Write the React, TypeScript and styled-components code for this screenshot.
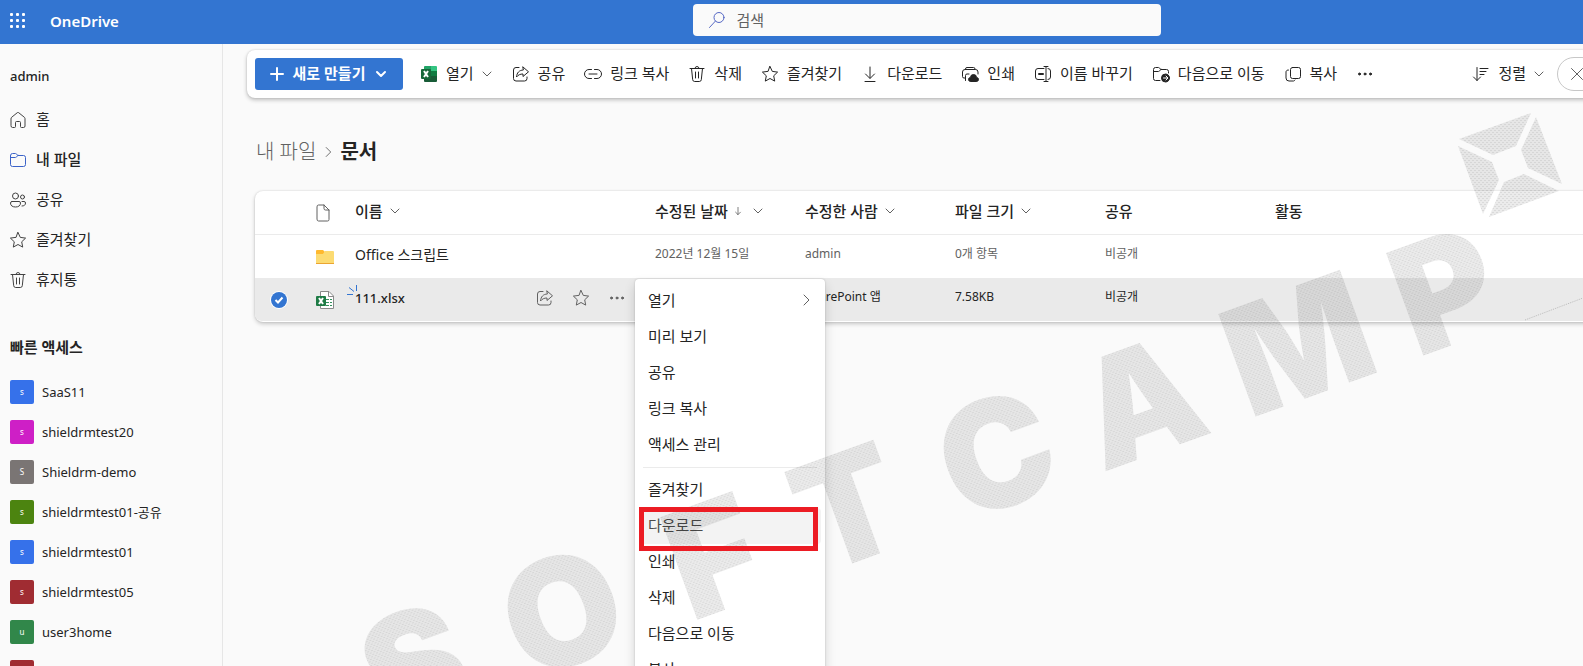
import React from 'react';
import styled, { createGlobalStyle, css } from 'styled-components';

const GlobalStyle = createGlobalStyle`
  *, *::before, *::after { box-sizing: border-box; }
  body {
    margin: 0;
    background: #fafafa;
    color: #242424;
    font-family: "Noto Sans", "Noto Sans CJK KR", sans-serif;
    font-size: 15px;
    line-height: 20px;
  }
  button, input { font: inherit; color: inherit; }
  a { color: inherit; text-decoration: none; }
  ul { list-style: none; margin: 0; padding: 0; }
`;

/* ---------- icons ---------- */

const Svg = styled.svg<{ $size?: number }>`
  display: block;
  flex: none;
  width: ${(p) => p.$size ?? 20}px;
  height: ${(p) => p.$size ?? 20}px;
  fill: none;
  stroke: currentColor;
  stroke-width: 1;
  stroke-linecap: round;
  stroke-linejoin: round;
`;

const drawings: Record<string, React.ReactNode> = {
  home: <path d="M3 8.6c0-.5.2-.9.5-1.2L9.300 2.700a1 1 0 0 1 1.400 0l5.800 4.700c.3.300.5.700.5 1.200V16a1.500 1.500 0 0 1-1.500 1.500h-2A1 1 0 0 1 12.500 16.500v-4a1 1 0 0 0-1-1h-3a1 1 0 0 0-1 1v4a1 1 0 0 1-1 1h-2A1.500 1.500 0 0 1 3 16z" />,
  folder: <path d="M2.500 6v8.500a2 2 0 0 0 2 2h11a2 2 0 0 0 2-2v-7a2 2 0 0 0-2-2H10L8.200 3.900a1.500 1.500 0 0 0-.9-.4H4.500a2 2 0 0 0-2 2zM2.500 7.500h4.700c.4 0 .7-.1 1-.4L10 5.500" />,
  people: (
    <>
      <circle cx="7.500" cy="6" r="3" />
      <circle cx="14.500" cy="7" r="2" />
      <path d="M4 11.500h7a1.500 1.500 0 0 1 1.500 1.500c0 2.500-1.800 4-5 4s-5-1.500-5-4A1.500 1.500 0 0 1 4 11.500zM14 11.500h2a1.500 1.500 0 0 1 1.500 1.500c0 2-1.300 3-3.500 3" />
    </>
  ),
  star: <path d="M10 2.500l2.300 4.900 5.300.7-3.900 3.700 1 5.300-4.700-2.600-4.700 2.600 1-5.300L2.400 8.100l5.300-.7z" />,
  trash: <path d="M3 4.500h14M8 4.500a2 2 0 0 1 4 0M4.500 4.500l1.200 11.200a2 2 0 0 0 2 1.800h4.600a2 2 0 0 0 2-1.800l1.200-11.200M8.500 8v6M11.500 8v6" />,
  share: <path d="M8 3.500H5A2.500 2.500 0 0 0 2.500 6v8.500A2.500 2.500 0 0 0 5 17h8.500a2.500 2.500 0 0 0 2.500-2.500V13M12 3l5.500 4.800-5.500 4.700V10c-2.800 0-4.700.8-6.500 3 .4-4.300 2.600-6.800 6.500-7z" />,
  link: <path d="M8.500 5.500H6a4.500 4.500 0 0 0 0 9h2.500M11.500 5.500H14a4.500 4.500 0 0 1 0 9h-2.500M6 10h8" />,
  download: <path d="M10 3v11M5.500 10l4.500 4.500L14.500 10M5 17.500h10" />,
  print: (
    <>
      <path d="M5.500 5.500V5A1.500 1.500 0 0 1 7 3.500h6.500A1.500 1.500 0 0 1 15 5v.500M5 14H4a1.500 1.500 0 0 1-1.500-1.500V8A2.500 2.500 0 0 1 5 5.500h10.500A2.500 2.500 0 0 1 18 8v2M5.500 16.500v-5A1.500 1.500 0 0 1 7 10h2" />
      <path fill="currentColor" d="M10.500 17.500a2 2 0 0 1 0-4 3 3 0 0 1 6 0 2 2 0 0 1 0 4z" />
    </>
  ),
  rename: (
    <>
      <path d="M11 4.500H5A2.500 2.500 0 0 0 2.500 7v6A2.500 2.500 0 0 0 5 15.500h6M15 4.500A2.500 2.500 0 0 1 17.500 7v6a2.500 2.500 0 0 1-2.500 2.500M11 2.500h4M11 17.500h4M13 2.500v15" />
      <path strokeWidth="2" d="M6 10h4" />
    </>
  ),
  move: (
    <>
      <path d="M9 16.500H4.500a2 2 0 0 1-2-2v-9a2 2 0 0 1 2-2h2.800c.4 0 .7.100.9.400L10 5.500h5.500a2 2 0 0 1 2 2v1.500M2.500 7.500h4.700c.4 0 .7-.1 1-.4L10 5.500" />
      <circle cx="14.500" cy="14" r="4" fill="currentColor" />
      <path stroke="#fff" d="M12.500 14h4M15 12l2 2-2 2" />
    </>
  ),
  copy: <path d="M9.500 3.500h6a2 2 0 0 1 2 2v7a2 2 0 0 1-2 2h-6a2 2 0 0 1-2-2v-7a2 2 0 0 1 2-2zM5.500 6a2 2 0 0 0-2.500 2v6a3 3 0 0 0 3 3h4.500a2 2 0 0 0 1.500-1" />,
  more: (
    <>
      <circle cx="4.500" cy="10" r="1" fill="currentColor" />
      <circle cx="10" cy="10" r="1" fill="currentColor" />
      <circle cx="15.500" cy="10" r="1" fill="currentColor" />
    </>
  ),
  sort: <path d="M6 3.500v13M2.500 13L6 16.500 9.500 13M9 4.500h8M9 7.500h6M9 10.500h4" />,
  close: <path d="M4.500 4.500l11 11M15.500 4.500l-11 11" />,
  search: (
    <>
      <circle cx="12" cy="7.500" r="5" />
      <path d="M8.300 11.200L2.500 17.500" />
    </>
  ),
  doc: <path d="M4 3.500A1.500 1.500 0 0 1 5.500 2H11l5 5v9.500a1.500 1.500 0 0 1-1.500 1.500h-9A1.500 1.500 0 0 1 4 16.500zM11 2v3.500A1.500 1.500 0 0 0 12.500 7H16" />,
  plus: <path strokeWidth="2" d="M10 4v12M4 10h12" />,
  down: <path d="M6 8l4 4 4-4" />,
  right: <path d="M8 5l5 5-5 5" />,
  arrow: <path d="M10 5.500v9M7 11.500l3 3 3-3" />,
};

const Icon = ({ name, size, width }: { name: string; size?: number; width?: number }) => (
  <Svg viewBox="0 0 20 20" $size={size} style={width ? { strokeWidth: width } : undefined} aria-hidden="true">
    {drawings[name]}
  </Svg>
);

const Caret = styled(Svg)`
  margin: 0 -4px;
  color: #616161;
`;

const DownCaret = () => (
  <Caret viewBox="0 0 20 20" aria-hidden="true">
    {drawings.down}
  </Caret>
);

const PlainSvg = styled.svg`
  display: block;
  flex: none;
`;

const ExcelIcon = () => (
  <PlainSvg width="20" height="20" viewBox="0 0 20 20" aria-hidden="true">
    <path fill="#21a366" d="M5 3a1 1 0 0 1 1-1h6v5H5z" />
    <path fill="#33c481" d="M12 2h5a1 1 0 0 1 1 1v4h-6z" />
    <path fill="#107c41" d="M12 7h6v5h-6z" />
    <path fill="#1a7040" d="M5 7h7v5H5z" />
    <path fill="#185c37" d="M5 12h13v5a1 1 0 0 1-1 1H6a1 1 0 0 1-1-1z" />
    <rect x="2" y="5" width="10" height="10" rx="1" fill="#17683a" />
    <path stroke="#fff" strokeWidth="2" d="M5 7l4 6M9 7l-4 6" />
  </PlainSvg>
);

const XlsxIcon = () => (
  <PlainSvg width="20" height="20" viewBox="0 0 20 20" aria-hidden="true">
    <path fill="#fff" stroke="#8a8a8a" d="M5.500 1.500h8.500l4.500 4.500v12.500h-13z" />
    <path fill="none" stroke="#8a8a8a" d="M13.500 1.500v5h5" />
    <path stroke="#33905c" strokeDasharray="3 1" d="M11 9.500h6M11 12.500h6M11 15.500h6" />
    <rect x="1" y="6" width="10" height="10" rx="1" fill="#1e7b45" />
    <path stroke="#fff" strokeWidth="2" d="M4 8l4 6M8 8l-4 6" />
  </PlainSvg>
);

const FolderIcon = () => (
  <PlainSvg width="20" height="20" viewBox="0 0 20 20" aria-hidden="true">
    <path fill="#ffb92e" d="M1 4a1 1 0 0 1 1-1h6l2 2-2 3H1z" />
    <path fill="#fcdb72" d="M1 7h7l2-3h8a1 1 0 0 1 1 1v11H1z" />
    <path fill="#eba531" d="M1 16h18v1H1z" />
  </PlainSvg>
);

/* ---------- top bar ---------- */

const Header = styled.header`
  position: relative;
  display: flex;
  align-items: center;
  flex: none;
  height: 44px;
  background: #3375d1;
  color: #fff;
`;

const Waffle = styled.button`
  display: flex;
  padding: 8px;
  border: 0;
  background: none;
`;

const Brand = styled.a`
  margin-left: 14px;
  padding-bottom: 3px;
  font-size: 15px;
  font-weight: 600;
`;

const Search = styled.label`
  position: absolute;
  top: 4px;
  left: calc(50% + 135px);
  display: flex;
  align-items: center;
  gap: 10px;
  width: 468px;
  height: 32px;
  padding: 0 14px;
  transform: translateX(-50%);
  border-radius: 4px;
  background: #fafafa;
  color: #5567c4;
`;

const SearchInput = styled.input`
  flex: 1;
  min-width: 0;
  padding: 0;
  border: 0;
  outline: 0;
  background: none;
  color: #242424;
  &::placeholder { color: #616161; opacity: 1; }
`;

/* ---------- frame ---------- */

const Page = styled.div`
  position: relative;
  display: flex;
  flex-direction: column;
  height: 100vh;
  overflow: hidden;
`;

const Body = styled.div`
  display: flex;
  flex: 1;
  min-height: 0;
`;

const Sidebar = styled.nav`
  flex: none;
  width: 223px;
  padding-top: 12px;
  overflow: hidden;
  border-right: 1px solid #e6e6e6;
`;

const UserName = styled.div`
  padding: 10px;
  height: 44px;
  font-size: 13px;
  font-weight: 500;
`;

/* Lifts the text slightly above the middle of the icon next to it. */
const Label = styled.span`
  padding-bottom: 2px;
`;

const NavLink = styled.a<{ $active?: boolean }>`
  display: flex;
  align-items: center;
  gap: 8px;
  height: 40px;
  padding-left: 8px;
  font-weight: ${(p) => (p.$active ? 500 : 400)};
  ${Svg} {
    color: ${(p) => (p.$active ? '#3a62c8' : '#424242')};
  }
`;

const SideTitle = styled.h2`
  margin: 0;
  padding: 37px 10px 15px;
  font-size: 15px;
  font-weight: 600;
`;

const SiteLink = styled.a`
  display: flex;
  align-items: center;
  gap: 8px;
  height: 40px;
  padding-left: 10px;
  font-size: 13px;
`;

const Tile = styled.span<{ $color: string }>`
  display: flex;
  align-items: center;
  justify-content: center;
  width: 24px;
  height: 24px;
  border-radius: 2px;
  background: ${(p) => p.$color};
  color: #fff;
  font-size: 8px;
`;

const Main = styled.main`
  flex: 1;
  min-width: 0;
  padding: 6px 0 0 24px;
  overflow: hidden;
`;

/* ---------- command bar ---------- */

const Toolbar = styled.div`
  display: flex;
  align-items: center;
  height: 48px;
  margin-right: -24px;
  padding: 0 8px;
  border-radius: 8px;
  background: #fff;
  box-shadow: 0 0 2px rgba(0, 0, 0, 0.14), 0 2px 4px rgba(0, 0, 0, 0.24);
  white-space: nowrap;
`;

const NewButton = styled.button`
  display: flex;
  align-items: center;
  justify-content: center;
  gap: 6px;
  width: 148px;
  height: 32px;
  margin-right: 7px;
  padding: 0;
  border: 0;
  border-radius: 3px;
  background: #3375d1;
  color: #fff;
  font-weight: 600;
`;

const Command = styled.button`
  display: flex;
  align-items: center;
  gap: 7px;
  height: 32px;
  padding: 0 9px;
  border: 0;
  background: none;
`;

const Spacer = styled.div`
  flex: 1;
`;

const ClearButton = styled.button`
  display: flex;
  align-items: center;
  flex: none;
  width: 42px;
  height: 34px;
  margin-left: 3px;
  padding: 0 9px;
  border: 1px solid #c7c7c7;
  border-radius: 17px;
  background: #fff;
  color: #616161;
`;

/* ---------- breadcrumb ---------- */

const Breadcrumb = styled.div`
  display: flex;
  align-items: center;
  gap: 3px;
  padding: 38px 0 23px 9px;
  font-size: 20px;
  line-height: 32px;
  color: #616161;
`;

const Parent = styled.a`
  font-weight: 300;
`;

const Current = styled.h1`
  margin: 0;
  font-size: 20px;
  font-weight: 600;
  color: #242424;
`;

/* ---------- file list ---------- */

const Card = styled.div`
  margin: 0 -24px 0 8px;
  padding-bottom: 1px;
  border-radius: 8px;
  background: #fff;
  box-shadow: 0 0 2px rgba(0, 0, 0, 0.14), 0 2px 4px rgba(0, 0, 0, 0.2);
`;

const Table = styled.table`
  width: 100%;
  table-layout: fixed;
  border-collapse: separate;
  border-spacing: 0;
  font-size: 12px;
  white-space: nowrap;
`;

const Col = styled.col<{ $width?: number }>`
  width: ${(p) => (p.$width ? `${p.$width}px` : 'auto')};
`;

const Th = styled.th`
  height: 44px;
  padding: 0 8px 3px;
  border-bottom: 1px solid #ebebeb;
  text-align: left;
  font-size: 15px;
  font-weight: 500;
`;

const IconTh = styled(Th)`
  padding: 0 10px;
  color: #616161;
`;

const SortButton = styled.button`
  display: flex;
  align-items: center;
  gap: 2px;
  padding: 0;
  border: 0;
  background: none;
  font-weight: inherit;
  ${Svg} { color: #616161; }
`;

const Row = styled.tr<{ $selected?: boolean }>`
  color: ${(p) => (p.$selected ? '#242424' : '#616161')};
  ${(p) =>
    p.$selected &&
    css`
      td { background: #eaeaea; }
      td:first-child { border-radius: 0 0 0 7px; }
      td:last-child { border-radius: 0 0 7px 0; }
    `}
`;

const Td = styled.td`
  height: 43px;
  padding: 0 8px 5px;
`;

const NameTd = styled(Td)`
  padding-bottom: 3px;
`;

const IconTd = styled(Td)`
  padding: 0 12px;
`;

const CheckTd = styled(Td)`
  padding: 0 8px;
`;

const NameCell = styled.div`
  display: flex;
  align-items: center;
  margin-right: 4px;
  color: #242424;
`;

const FileLink = styled.a<{ $strong?: boolean }>`
  position: relative;
  margin-right: auto;
  font-size: ${(p) => (p.$strong ? 13 : 14)}px;
  font-weight: ${(p) => (p.$strong ? 500 : 400)};
`;

const Spark = styled.svg`
  position: absolute;
  left: -9px;
  top: -4px;
  fill: none;
  stroke: #3375d1;
`;

const RowButton = styled.button`
  display: flex;
  align-items: center;
  justify-content: center;
  width: 36px;
  height: 40px;
  padding: 0;
  border: 0;
  background: none;
  color: #616161;
`;

const MoreWrap = styled.div`
  position: relative;
`;

const Check = styled.label`
  display: block;
  position: relative;
  width: 16px;
  height: 16px;
  margin-left: 8px;
  border-radius: 50%;
  background: #3375d1;
  box-shadow: 0 0 0 1px #fff;
  color: #fff;
  input {
    position: absolute;
    inset: 0;
    margin: 0;
    opacity: 0;
  }
`;

/* ---------- context menu ---------- */

const Menu = styled.ul`
  position: absolute;
  left: 100%;
  top: 1px;
  width: 190px;
  padding: 4px;
  border-radius: 4px;
  background: #fff;
  box-shadow: 0 0 2px rgba(0, 0, 0, 0.2), 0 6px 12px rgba(0, 0, 0, 0.16);
`;

const MenuRow = styled.li`
  position: relative;
`;

const MenuButton = styled.button<{ $hover?: boolean }>`
  display: flex;
  align-items: center;
  justify-content: space-between;
  width: 100%;
  height: 36px;
  padding: 0 9px 2px;
  border: 0;
  border-radius: 4px;
  background: ${(p) => (p.$hover ? '#f3f3f3' : 'transparent')};
  color: ${(p) => (p.$hover ? '#4a4a4a' : '#242424')};
  font-size: 15px;
  ${Svg} { margin-right: -4px; color: #616161; }
`;

const Divider = styled.li`
  height: 1px;
  margin: 4px;
  background: #ebebeb;
`;

const Highlight = styled.div`
  position: absolute;
  z-index: 2;
  inset: -1px 3px -7px 0;
  border: 5px solid #ec1c24;
  pointer-events: none;
`;

const Watermark = styled.svg`
  position: absolute;
  z-index: 1;
  inset: 0;
  width: 100%;
  height: 100%;
  pointer-events: none;
  font-family: Inter, "Liberation Sans", sans-serif;
  font-size: 150px;
  font-weight: 900;
`;

/* ---------- data ---------- */

const navItems = [
  { icon: 'home', label: '홈' },
  { icon: 'folder', label: '내 파일', active: true },
  { icon: 'people', label: '공유' },
  { icon: 'star', label: '즐겨찾기' },
  { icon: 'trash', label: '휴지통' },
];

const sites = [
  { mark: 's', color: '#3671ea', label: 'SaaS11' },
  { mark: 's', color: '#ce1fc6', label: 'shieldrmtest20' },
  { mark: 'S', color: '#7a7574', label: 'Shieldrm-demo' },
  { mark: 's', color: '#4c8410', label: 'shieldrmtest01-공유' },
  { mark: 's', color: '#3671ea', label: 'shieldrmtest01' },
  { mark: 's', color: '#a02c32', label: 'shieldrmtest05' },
  { mark: 'u', color: '#31874a', label: 'user3home' },
  { mark: '', color: '#a02c32', label: '' },
];

const commands = [
  { icon: 'share', label: '공유' },
  { icon: 'link', label: '링크 복사' },
  { icon: 'trash', label: '삭제' },
  { icon: 'star', label: '즐겨찾기' },
  { icon: 'download', label: '다운로드' },
  { icon: 'print', label: '인쇄' },
  { icon: 'rename', label: '이름 바꾸기' },
  { icon: 'move', label: '다음으로 이동' },
  { icon: 'copy', label: '복사' },
];

const menuItems = ['열기', '미리 보기', '공유', '링크 복사', '액세스 관리', '-', '즐겨찾기', '다운로드', '인쇄', '삭제', '다음으로 이동', '복사'];

const columns = [
  { label: '수정된 날짜', sorted: true, menu: true },
  { label: '수정한 사람', menu: true },
  { label: '파일 크기', menu: true },
  { label: '공유' },
  { label: '활동' },
];

const ContextMenu = () => (
  <Menu role="menu">
    {menuItems.map((label, i) =>
      label === '-' ? (
        <Divider key={i} role="separator" />
      ) : (
        <MenuRow key={i} role="none">
          <MenuButton role="menuitem" $hover={label === '다운로드'}>
            {label}
            {i === 0 && <Icon name="right" />}
          </MenuButton>
          {label === '다운로드' && <Highlight />}
        </MenuRow>
      ),
    )}
  </Menu>
);

const FileTable = () => (
  <Card>
    <Table>
      <colgroup>
        {[48, 44, 300, 150, 150, 150, 170, 0].map((w, i) => (
          <Col key={i} $width={w} />
        ))}
      </colgroup>
      <thead>
        <tr>
          <Th />
          <IconTh><Icon name="doc" /></IconTh>
          <Th><SortButton>이름<Icon name="down" /></SortButton></Th>
          {columns.map((c) => (
            <Th key={c.label}>
              {c.menu ? (
                <SortButton>
                  {c.label}
                  {c.sorted && <Icon name="arrow" size={16} />}
                  <Icon name="down" />
                </SortButton>
              ) : (
                c.label
              )}
            </Th>
          ))}
        </tr>
      </thead>
      <tbody>
        <Row>
          <Td />
          <IconTd><FolderIcon /></IconTd>
          <NameTd><NameCell><FileLink href="#">Office 스크립트</FileLink></NameCell></NameTd>
          <Td>2022년 12월 15일</Td>
          <Td>admin</Td>
          <Td>0개 항목</Td>
          <Td>비공개</Td>
          <Td />
        </Row>
        <Row $selected>
          <CheckTd>
            <Check>
              <input type="checkbox" defaultChecked aria-label="111.xlsx" />
              <PlainSvg width="16" height="16" viewBox="0 0 16 16" fill="none" stroke="currentColor" strokeWidth="2">
                <path d="M4.500 8l2.500 2.500 4.500-5" />
              </PlainSvg>
            </Check>
          </CheckTd>
          <IconTd><XlsxIcon /></IconTd>
          <NameTd>
            <NameCell>
              <FileLink href="#" $strong>
                <Spark width="12" height="12" viewBox="0 0 12 12" aria-hidden="true">
                  <path d="M1 10.500h6M3 3.500l5 4M10.500 1v6" />
                </Spark>
                111.xlsx
              </FileLink>
              <RowButton aria-label="공유"><Icon name="share" /></RowButton>
              <RowButton aria-label="즐겨찾기"><Icon name="star" /></RowButton>
              <MoreWrap>
                <RowButton aria-label="기타"><Icon name="more" /></RowButton>
                <ContextMenu />
              </MoreWrap>
            </NameCell>
          </NameTd>
          <Td />
          <Td>SharePoint 앱</Td>
          <Td>7.58KB</Td>
          <Td>비공개</Td>
          <Td />
        </Row>
      </tbody>
    </Table>
  </Card>
);

export default function App() {
  return (
    <>
      <GlobalStyle />
      <Page>
        <Header>
          <Waffle aria-label="앱 시작 관리자">
            <PlainSvg width="20" height="20" viewBox="0 0 20 20" fill="#fff">
              {[2, 8, 14].map((y) => [2, 8, 14].map((x) => <rect key={`${x}${y}`} x={x} y={y - 1} width="3" height="3" rx="1" />))}
            </PlainSvg>
          </Waffle>
          <Brand href="#">OneDrive</Brand>
          <Search>
            <Icon name="search" />
            <SearchInput type="search" placeholder="검색" aria-label="검색" />
          </Search>
        </Header>
        <Body>
          <Sidebar>
            <UserName>admin</UserName>
            {navItems.map((n) => (
              <NavLink key={n.label} href="#" $active={n.active}>
                <Icon name={n.icon} />
                <Label>{n.label}</Label>
              </NavLink>
            ))}
            <SideTitle>빠른 액세스</SideTitle>
            {sites.map((s, i) => (
              <SiteLink key={i} href="#">
                <Tile $color={s.color}>{s.mark}</Tile>
                {s.label}
              </SiteLink>
            ))}
          </Sidebar>
          <Main>
            <Toolbar role="toolbar">
              <NewButton>
                <Icon name="plus" />
                <Label>새로 만들기</Label>
                <Icon name="down" width={2} />
              </NewButton>
              <Command>
                <ExcelIcon />
                <Label>열기</Label>
                <DownCaret />
              </Command>
              {commands.map((c) => (
                <Command key={c.label}>
                  <Icon name={c.icon} />
                  <Label>{c.label}</Label>
                </Command>
              ))}
              <Command aria-label="기타"><Icon name="more" /></Command>
              <Spacer />
              <Command>
                <Icon name="sort" />
                <Label>정렬</Label>
                <DownCaret />
              </Command>
              <ClearButton aria-label="선택 취소"><Icon name="close" /></ClearButton>
            </Toolbar>
            <Breadcrumb>
              <Parent href="#">내 파일</Parent>
              <Icon name="right" size={18} />
              <Current>문서</Current>
            </Breadcrumb>
            <FileTable />
          </Main>
        </Body>
        <Watermark viewBox="0 0 1583 666" preserveAspectRatio="xMinYMin slice" aria-hidden="true">
          <defs>
            <pattern id="hatch" width="4" height="4" patternUnits="userSpaceOnUse">
              <rect width="4" height="4" fill="#000" fillOpacity="0.08" />
              <path d="M0 0h2v1H0zM2 2h2v1H2z" fill="#000" fillOpacity="0.07" />
            </pattern>
          </defs>
          <g fill="url(#hatch)">
            <g transform="rotate(-20)">
              <text y="821" x="162 319 480 623 781 934 1102 1258" textAnchor="middle">SOFTCAMP</text>
            </g>
            <path d="M1459 139L1531 113L1516 146L1493 155zM1536 117L1562 184L1528 168L1521 150zM1559 191L1489 217L1504 182L1524 174zM1458 146L1492 162L1499 180L1483 214z" />
          </g>
          <path d="M1525 320L1583 298" stroke="#000" strokeOpacity="0.2" strokeDasharray="1 1" />
        </Watermark>
      </Page>
    </>
  );
}
